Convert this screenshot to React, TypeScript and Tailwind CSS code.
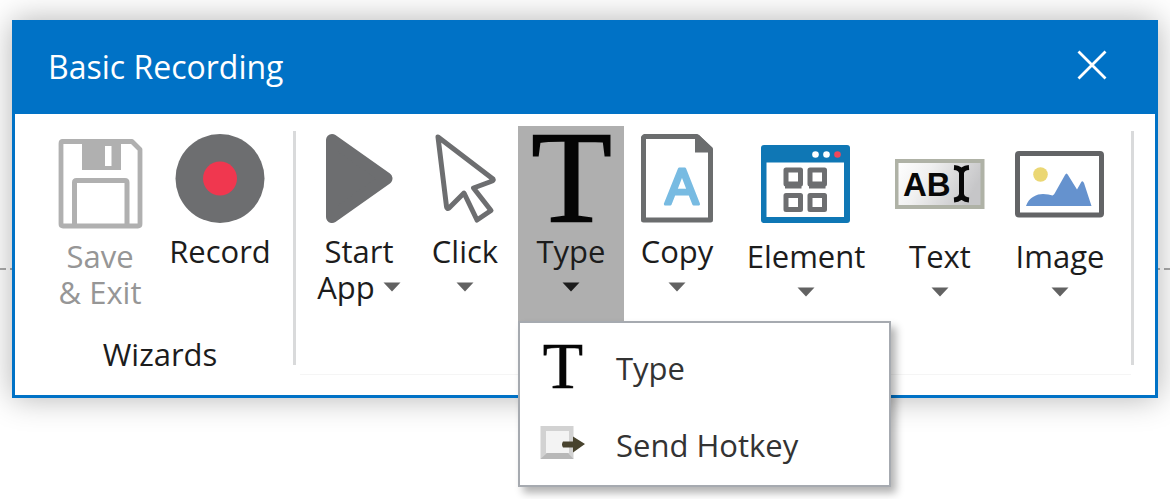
import type { ReactNode } from "react";
import { clsx } from "clsx";

function SaveIcon() {
  return (
    <svg width="90" height="95" viewBox="0 0 90 95" fill="none" aria-hidden="true">
      <path
        d="M7 7.5H77L85 15.5V90Q85 92 83 92H8Q6 92 6 90V9.5Q6 7.5 8 7.5Z"
        stroke="#b0b0b0"
        strokeWidth="4.8"
        strokeLinejoin="round"
      />
      <path d="M27 7H66V36H27Z" fill="#b0b0b0" />
      <path d="M50 12H56.500V32H50Z" fill="#fff" />
      <path
        d="M19.500 92V48.500Q19.500 46.500 21.500 46.500H70Q72 46.500 72 48.500V92"
        stroke="#b0b0b0"
        strokeWidth="5"
      />
    </svg>
  );
}

function RecordIcon() {
  return (
    <svg width="90" height="90" viewBox="0 0 90 90" aria-hidden="true">
      <circle cx="45" cy="44.500" r="44.500" fill="#6d6e70" />
      <circle cx="45" cy="44.500" r="17" fill="#f0374f" />
    </svg>
  );
}

function PlayIcon() {
  return (
    <svg width="90" height="90" viewBox="0 0 90 90" aria-hidden="true">
      <path
        d="M18 6L72.500 44.500L18 83Z"
        fill="#6d6e70"
        stroke="#6d6e70"
        strokeWidth="12"
        strokeLinejoin="round"
      />
    </svg>
  );
}

function PointerIcon() {
  return (
    <svg width="90" height="90" viewBox="0 0 90 90" fill="none" aria-hidden="true">
      <path
        d="M18 3L73 45Q74 46.500 71 47.500L53.500 54L71 76.500L57 86L44 59L29 74Q27 75.500 26.500 72.500Z"
        stroke="#6d6e70"
        strokeWidth="5"
        strokeLinejoin="round"
      />
    </svg>
  );
}

function TypeIcon() {
  return (
    <svg width="90" height="90" viewBox="0 0 90 90" className="overflow-visible" aria-hidden="true">
      <text
        x="45.500"
        y="88.300"
        textAnchor="middle"
        fontSize="132"
        fontFamily='"Liberation Serif", serif'
        fill="#050505"
        stroke="#050505"
        strokeWidth="1.600"
      >
        T
      </text>
    </svg>
  );
}

function CopyIcon() {
  return (
    <svg width="90" height="90" viewBox="0 0 90 90" fill="none" aria-hidden="true">
      <path
        d="M12.500 2.500H65L78.500 15V86H11.500V3.500Z"
        stroke="#6b6d6e"
        strokeWidth="5"
        strokeLinejoin="round"
      />
      <path d="M63 1H67L80 14V18.500H63Z" fill="#6b6d6e" />
      <text
        x="50"
        y="70"
        textAnchor="middle"
        fontSize="50"
        fontFamily='"Liberation Sans", sans-serif'
        fill="#78bbe2"
        stroke="#78bbe2"
        strokeWidth="3"
        strokeLinejoin="round"
      >
        A
      </text>
    </svg>
  );
}

function ElementIcon() {
  return (
    <svg width="90" height="90" viewBox="0 0 90 90" fill="none" aria-hidden="true">
      <rect x="0" y="11" width="89" height="78" rx="3" fill="#0f77b5" />
      <rect x="5.500" y="28.500" width="77.500" height="54.500" fill="#fff" />
      <circle cx="54.500" cy="20.500" r="3.300" fill="#fff" />
      <circle cx="65.500" cy="20.500" r="3.300" fill="#fff" />
      <circle cx="76.500" cy="20.500" r="3.300" fill="#f0475b" />
      <g stroke="#6d6e70" strokeWidth="5" strokeLinejoin="round">
        <path d="M25 36H39.500V50H25Z" />
        <path d="M49 36H63.500V50H49Z" />
        <path d="M25 61.500H39.500V75.500H25Z" />
        <path d="M49 61.500H63.500V75.500H49Z" />
        <path d="M24 52.500H40.500M48 52.500H64.500" strokeWidth="4" />
      </g>
    </svg>
  );
}

function TextIcon() {
  return (
    <svg width="90" height="90" viewBox="0 0 90 90" aria-hidden="true">
      <defs>
        <linearGradient id="field" x1="0" y1="0" x2="1" y2="0.300">
          <stop offset="0" stopColor="#fff" />
          <stop offset="0.400" stopColor="#f0f0f0" />
          <stop offset="1" stopColor="#c6c6c8" />
        </linearGradient>
      </defs>
      <rect x="1.500" y="27" width="86" height="46" fill="url(#field)" stroke="#afb2a6" strokeWidth="4" />
      <text
        x="8"
        y="62"
        fontSize="33"
        fontWeight="700"
        fontFamily='"Liberation Sans", sans-serif'
        fill="#080808"
      >
        AB
      </text>
      <path
        d="M59 33.500Q66 34 66.500 39Q67 34 74 33.500M59 66Q66 65.500 66.500 60Q67 65.500 74 66M66.500 37V62"
        fill="none"
        stroke="#080808"
        strokeWidth="5"
      />
    </svg>
  );
}

function ImageIcon() {
  return (
    <svg width="90" height="90" viewBox="0 0 90 90" aria-hidden="true">
      <rect x="2.500" y="19.500" width="84" height="61.500" rx="1.500" fill="#fff" stroke="#636466" strokeWidth="5" />
      <circle cx="25.500" cy="40.500" r="7.300" fill="#ebd774" />
      <path
        d="M11 72C14 63 22 60 28 60Q34 60 37.500 61.500Q39 61 41 57L50 41Q51.500 38 53 41L62 55.500L66 48.500Q67.500 46 69 49L76.500 72Z"
        fill="#6592ce"
      />
    </svg>
  );
}

function HotkeyIcon() {
  return (
    <svg width="46" height="36" viewBox="0 0 46 36" aria-hidden="true">
      <rect x="0.500" y="1" width="33" height="33" fill="#d2d2d2" />
      <path d="M0.500 34H33.500L28 28H7Z" fill="#b8b8b8" />
      <rect x="6" y="6" width="23" height="22" fill="#f3f3f3" />
      <path
        d="M23 16.500H33V11.500L45 19L33 27.500V22.500H23Q21 19.500 23 16.500Z"
        fill="#48432e"
      />
    </svg>
  );
}

function Caret({ dark = false }: { dark?: boolean }) {
  return (
    <svg width="18" height="10" viewBox="0 0 18 10" aria-hidden="true">
      <path d="M0.500 0.500H17.500L9 9.500Z" fill={dark ? "#1c1c1c" : "#626262"} />
    </svg>
  );
}

type RibbonButtonProps = {
  icon: ReactNode;
  label: string;
  secondLine?: ReactNode;
  size?: string;
  low?: boolean;
  active?: boolean;
  disabled?: boolean;
};

function RibbonButton({
  icon,
  label,
  secondLine,
  size = "basis-[106px]",
  low = false,
  active = false,
  disabled = false,
}: RibbonButtonProps) {
  return (
    <button
      type="button"
      disabled={disabled}
      className={clsx(
        "flex h-full grow flex-col items-center pt-2",
        size,
        active && "bg-[#afafaf]",
        disabled ? "text-[#969696]" : "text-[#1c1c1c]",
      )}
    >
      <span className={clsx("block", low ? "h-[104px]" : "h-[99px]")}>{icon}</span>
      <span className="whitespace-nowrap">{label}</span>
      <span className="flex h-9 items-center gap-2 whitespace-nowrap">{secondLine}</span>
    </button>
  );
}

function TypeMenu() {
  const item = "flex h-[77px] w-full items-center gap-[30px] pl-5 text-left text-[#333]";

  return (
    <div
      role="menu"
      className="absolute top-full left-0 z-10 w-[373px] border-2 border-[#a6aab0] bg-white py-1 shadow-[5px_6px_8px_rgba(0,0,0,0.3)]"
    >
      <button type="button" role="menuitem" className={item}>
        <svg width="46" height="44" viewBox="0 0 46 44" className="overflow-visible" aria-hidden="true">
          <text
            x="23"
            y="44"
            textAnchor="middle"
            fontSize="66"
            fontFamily='"Liberation Serif", serif'
            fill="#050505"
            stroke="#050505"
            strokeWidth="0.600"
          >
            T
          </text>
        </svg>
        <span className="pt-1">Type</span>
      </button>
      <button type="button" role="menuitem" className={item}>
        <HotkeyIcon />
        <span className="pt-1">Send Hotkey</span>
      </button>
    </div>
  );
}

function Separator() {
  return <div className="mt-[5px] h-[234px] w-[3px] shrink-0 bg-[#d9dadb]" />;
}

export default function App() {
  return (
    <div className="relative min-h-screen overflow-hidden bg-white px-3 pt-5 font-['Open_Sans','Noto_Sans',sans-serif] text-[31px] leading-9">
      {/* guide line of the canvas behind the window */}
      <div className="absolute inset-x-0 top-[268px] border-t-2 border-dashed border-[#aaa]" />

      <section className="relative border-3 border-t-0 border-[#0072c6] bg-white shadow-[0_0_30px_rgba(0,0,0,0.3)]">
        <header className="flex h-[94px] items-center justify-between bg-[#0072c6] pr-11 pb-1 pl-[33px] text-white">
          <h1 className="pt-1 text-[32px]">Basic Recording</h1>
          <button type="button" aria-label="Close" className="p-1">
            <svg width="30" height="30" viewBox="0 0 30 30" aria-hidden="true">
              <path d="M1.500 1.500L28.500 28.500M28.500 1.500L1.500 28.500" stroke="#fff" strokeWidth="2.800" />
            </svg>
          </button>
        </header>

        <div className="flex pt-3 pr-[21px] pb-5 pl-8">
          <div className="flex grow basis-[246px] flex-col pr-5">
            <div className="flex h-[195px] gap-[14px]">
              <RibbonButton icon={<SaveIcon />} label="Save" secondLine="& Exit" low disabled />
              <RibbonButton icon={<RecordIcon />} label="Record" />
            </div>
            <p className="pt-[15px] text-center text-[#1c1c1c]">Wizards</p>
          </div>

          <Separator />

          <div className="ml-1 flex grow basis-[831px] border-b border-[#f5f5f5] pr-[9px] pb-[53px] pl-[6px]">
            <div className="flex h-[195px] grow">
              <RibbonButton
                icon={<PlayIcon />}
                label="Start"
                secondLine={
                  <>
                    App
                    <Caret />
                  </>
                }
              />
              <RibbonButton icon={<PointerIcon />} label="Click" secondLine={<Caret />} />
              <div className="relative grow basis-[106px]">
                <div className="flex h-full">
                  <RibbonButton icon={<TypeIcon />} label="Type" secondLine={<Caret dark />} active />
                </div>
                <TypeMenu />
              </div>
              <RibbonButton icon={<CopyIcon />} label="Copy" secondLine={<Caret />} />
              <RibbonButton
                icon={<ElementIcon />}
                label="Element"
                secondLine={<Caret />}
                size="basis-[152px]"
                low
              />
              <RibbonButton
                icon={<TextIcon />}
                label="Text"
                secondLine={<Caret />}
                size="basis-[116px]"
                low
              />
              <RibbonButton
                icon={<ImageIcon />}
                label="Image"
                secondLine={<Caret />}
                size="basis-[124px]"
                low
              />
            </div>
          </div>

          <Separator />
        </div>
      </section>
    </div>
  );
}
